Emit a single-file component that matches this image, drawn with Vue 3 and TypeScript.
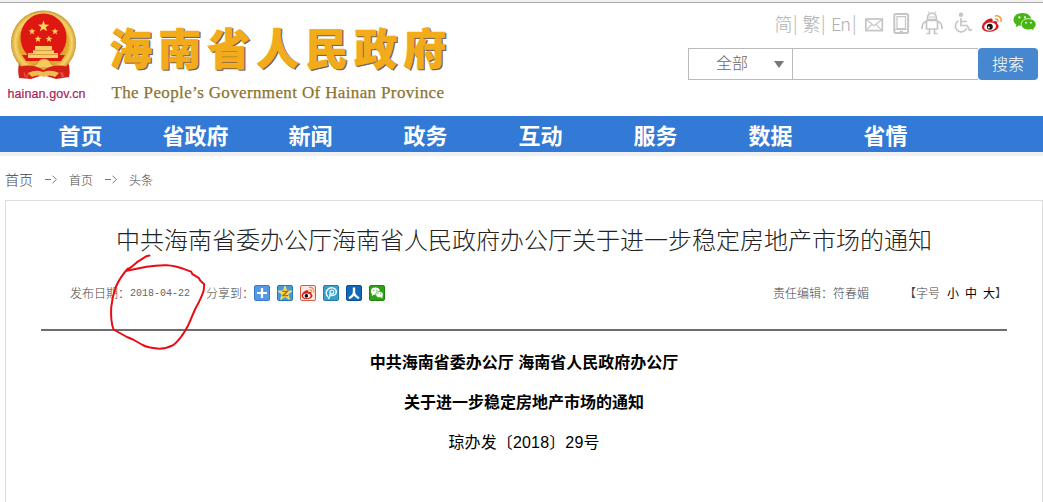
<script setup lang="ts">
const navItems: string[] = ['首页', '省政府', '新闻', '政务', '互动', '服务', '数据', '省情']
const crumbs: string[] = ['首页', '头条']
const star = 'M0-1 .24-.32 .95-.31 .38.12 .59.81 0 .4-.59.81-.38.12-.95-.31-.24-.32Z'
const smallStars: number[][] = [[32, 31.5], [55, 31.5], [38, 39], [49, 39]]
</script>

<template>
  <div class="page">
    <div class="strip"></div>
    <header class="header">
      <svg class="logo" width="460" height="113" viewBox="0 3 460 113">
        <defs>
          <radialGradient id="gold">
            <stop offset=".74" stop-color="#e3a62c" />
            <stop offset=".87" stop-color="#f3d568" />
            <stop offset="1" stop-color="#d29f34" />
          </radialGradient>
        </defs>
        <path d="M20 59Q17 69 19 78L31 79 43 75 56 79 69 77Q71 69 67 58Z" fill="#d3211a" />
        <path d="M23 66l2 11M64 66l-2 11M29 73l-3 5M60 72l4 5" stroke="#ee5540" stroke-width="1.3" />
        <ellipse cx="43.5" cy="43" rx="32.5" ry="32.5" fill="url(#gold)" />
        <ellipse cx="43.5" cy="43" rx="32" ry="32" fill="none" stroke="#c1944a" stroke-width=".6" stroke-dasharray="2 1.5" />
        <ellipse cx="43.5" cy="37.5" rx="23" ry="24" fill="#df1712" />
        <path d="M22 55h43l-4 6H26Z" fill="#df1712" />
        <path d="M33 53v-3h2v-4h17v4h2v3h4v5H28v-5Z" fill="#f4cf68" />
        <path d="M33 50.5h21M28 54.5h30" stroke="#c77a28" stroke-width=".6" />
        <g :transform="'translate(43.5 26.5) scale(6)'"><path :d="star" fill="#ffd65b" /></g>
        <g v-for="s in smallStars" :key="s.join()" :transform="`translate(${s[0]} ${s[1]}) scale(3.6)`">
          <path :d="star" fill="#ffd35c" />
        </g>
        <path d="M37 64q2-5 7-5t7 5l3 1-3 3H37l-4-3Z" fill="#f3ca60" stroke="#c58a22" stroke-width=".8" />
        <path d="M20 67q11-4 23.500 3 12-7 24-3l-2 6q-11-3-22 3-10-6-22-3Z" fill="#d3211a" />
        <path d="M28 73q8-4 15-1 8-3 16 1l-4 4q-6-3-11 0-7-3-12 0Z" fill="#efbd4d" />
        <text class="domain" x="7.5" y="98" textLength="78">hainan.gov.cn</text>
        <text class="brand shadow" x="110.5" y="66.4" textLength="337">海南省人民政府</text>
        <text class="brand" x="109.200" y="65" textLength="337">海南省人民政府</text>
        <text class="english" x="111.5" y="97.7" textLength="332.5">The People’s Government Of Hainan Province</text>
      </svg>
      <div class="tools">
        <svg class="toolbar" width="270" height="28" viewBox="770 10 270 28">
          <g class="lang">
            <text x="774.5" y="31">简</text><text x="793" y="30">|</text>
            <text x="802.5" y="31">繁</text><text x="821" y="30">|</text>
            <text x="831" y="31" textLength="20">En</text><text x="852" y="30">|</text>
          </g>
          <g fill="none" stroke="#c6c6c6" stroke-width="1.7">
            <rect x="865.8" y="19" width="16.5" height="11.6" />
            <path d="M866 19.5l8 6.3 8-6.3M866 30.3l6-6M882 30.3l-6-6" stroke-width="1.2" />
            <rect x="894.3" y="14" width="13.8" height="19" rx="1.5" stroke-width="2" />
            <path d="M897 16.7h8.5v11.8H897ZM894 29.5h14M899.8 31.4h3" stroke-width="1.2" />
            <path d="M927.5 19.500v-2a4.400 4.400 0 0 1 8.800 0v2ZM926.500 20.500h11v8.500h-11ZM926 21.500q-3.500 1-4 6M938 21.500q3.500 1 4 6M929.500 29.500v4h-3M934.500 29.500v4h3M922 29v-3M942 29v-3" />
            <path d="M929 13l-1-1.500M935 13l1-1.500M929 17h6" stroke-width="1.2" />
            <path d="M961 18v7.500h6.300l2.400 5 2.500-1M961 21.500h6M958.500 20.800a5.900 5.900 0 1 0 8.200 7.500" />
            <circle cx="961" cy="14.8" r="1.4" fill="#c6c6c6" />
          </g>
          <g>
            <path d="M982 27c0-5 7.5-9.8 10-8.2 1.2.8.8 2.2.4 3 3-1.3 5.5-.9 4.5 2 3.6 1.4 1.9 7.2-6.5 7.9-5 .3-8.4-1.6-8.4-4.7Z" fill="#d91822" />
            <ellipse cx="990.2" cy="26.6" rx="6" ry="4" fill="#fff" transform="rotate(-8 990 27)" />
            <circle cx="989.8" cy="26.8" r="3" fill="#161616" />
            <circle cx="988.8" cy="27.4" r="1" fill="#fff" />
            <path d="M995 16c4.5-.8 7.2 2.1 6 6M995.2 19c2-.3 3.2 1 2.7 2.8" fill="none" stroke="#ee9a35" stroke-width="1.5" />
          </g>
          <g fill="#48b514">
            <path d="M1022.5 13c-5.4 0-9 2.9-9 6.7 0 2.1 1.1 3.8 2.9 5l-.8 2.5 3.2-1.6 3.7.5c5 0 8.8-2.8 8.8-6.5s-3.6-6.6-8.8-6.6Z" />
            <path d="M1028.6 18.7c-4.3 0-7.4 2.4-7.4 5.6s3.1 5.7 7.4 5.7l2.8-.4 2.9 1.4-.7-2.2c1.5-1.1 2.5-2.6 2.5-4.5 0-3.2-3.3-5.6-7.5-5.6Z" stroke="#fff" stroke-width=".8" />
            <g fill="#fff"><circle cx="1019.4" cy="17.4" r="1.1" /><circle cx="1025" cy="17.4" r="1.1" /><circle cx="1026" cy="22.7" r=".9" /><circle cx="1031" cy="22.7" r=".9" /></g>
          </g>
        </svg>
        <div class="search">
          <div class="scope"><span>全部</span><i class="caret"></i></div>
          <div class="field"></div>
          <button class="go">搜索</button>
        </div>
      </div>
    </header>

    <nav class="nav">
      <a v-for="item in navItems" :key="item">{{ item }}</a>
    </nav>

    <div class="crumbs">
      <span class="root">首页</span>
      <template v-for="c in crumbs" :key="c">
        <svg width="12" height="9" viewBox="0 0 12 9"><path d="M0 4.5h6M7.5.7l3.800 3.800-3.800 3.800" fill="none" stroke="#777" /></svg>
        <span>{{ c }}</span>
      </template>
    </div>

    <main class="card">
      <h1>中共海南省委办公厅海南省人民政府办公厅关于进一步稳定房地产市场的通知</h1>
      <div class="meta">
        <span>发布日期：</span><span class="date">2018-04-22</span>
        <span class="share-label">分享到：</span>
        <div class="share">
          <svg viewBox="0 0 16 16"><rect x=".5" y=".5" width="15" height="15" rx="1.5" fill="#5598e8" stroke="#3c78c8" /><path d="M8 3v10M3 8h10" stroke="#fff" stroke-width="2.2" /></svg>
          <svg viewBox="0 0 16 16"><rect x=".5" y=".5" width="15" height="15" rx="1.5" fill="#469bd5" stroke="#2877b6" /><path transform="translate(8 8.4) scale(7.4)" :d="star" fill="#ffd431" stroke="#ffe77b" stroke-width=".12" stroke-linejoin="round" /><path d="M5.3 6.4h5L6 10.6h5" fill="none" stroke="#a86e00" stroke-width="1.4" /></svg>
          <svg viewBox="0 0 16 16"><rect x=".5" y=".5" width="15" height="15" rx="1.5" fill="#fce8dc" stroke="#d75c43" /><path d="M1.7 11c0-3.5 4.8-6.7 6.3-5.5.8.6.5 1.4.3 2 2-.8 3.7-.5 3 1.4 2.5 1.2 1.1 5-4.5 5.2-3 .1-5.1-1-5.1-3.1Z" fill="#d91d1b" /><ellipse cx="6.8" cy="10.8" rx="3.7" ry="2.4" fill="#fff" /><circle cx="6.4" cy="10.9" r="1.8" fill="#111" /><path d="M9 2.5c3.5-.7 5.8 2 4.8 5M9.3 4.8c1.8-.2 2.8.8 2.3 2.2" fill="none" stroke="#f08d3a" stroke-width="1.2" /></svg>
          <svg viewBox="0 0 16 16"><rect x=".5" y=".5" width="15" height="15" rx="1.5" fill="#3aa0c8" stroke="#227da8" /><path d="M5 11.800C2.500 9.800 2.600 5.800 5.400 3.800 8.500 1.700 13.400 3 13.300 7c-.1 3.300-3.500 4.300-5.500 2.600M5.400 14c1.500-1.600 1.800-4 2.200-6.600" fill="none" stroke="#e8f8ff" stroke-width="1.5" /><circle cx="8.8" cy="7" r="1.9" fill="none" stroke="#e8f8ff" stroke-width="1.2" /></svg>
          <svg viewBox="0 0 16 16"><rect x=".5" y=".5" width="15" height="15" rx="1.5" fill="#1168bb" stroke="#094f98" /><path d="M8 2.5v4c0 3-1.700 5.300-5 6.700M8 6.500c0 3 1.700 5.300 5 6.700" fill="none" stroke="#fff" stroke-width="2.3" /></svg>
          <svg viewBox="0 0 16 16"><rect x=".5" y=".5" width="15" height="15" rx="1.5" fill="#2da313" stroke="#1e850d" /><ellipse cx="6.3" cy="6.2" rx="4.4" ry="3.6" fill="#fff" /><path d="M3 8.5L2.8 11 6 9Z" fill="#fff" /><ellipse cx="10.4" cy="9.5" rx="3.8" ry="3.1" fill="#fff" stroke="#2da313" stroke-width=".7" /><path d="M11.5 12l2 1.4-.2-2.7Z" fill="#fff" /><g fill="#2da313"><circle cx="4.8" cy="5.3" r=".6" /><circle cx="7.8" cy="5.3" r=".6" /><circle cx="9.1" cy="8.8" r=".5" /><circle cx="11.7" cy="8.8" r=".5" /></g></svg>
        </div>
        <span class="editor">责任编辑：符春媚</span>
        <span class="sizes">【字号<b>小</b><b>中</b><b>大</b>】</span>
      </div>
      <div class="body">
        <p><strong>中共海南省委办公厅 海南省人民政府办公厅</strong></p>
        <p><strong>关于进一步稳定房地产市场的通知</strong></p>
        <p class="number">琼办发〔2018〕29号</p>
      </div>
    </main>

    <svg class="mark" width="110" height="105" viewBox="103 250 110 105">
      <path d="M149.5 255.5l-3 .7-9.8 6.2-6 5-5.2 3.6 21-4.3q10-1.7 20-1.5 9 .3 18.5 4.2l6 2.2 1.5 2.6 6.5 4 1.2 2.4 4 3.6-.5 6.3q-2.5 8-8.5 18.5l-7.5 17.3q-7 13-14 18.500-8 4.200-16 3.800-10-1-15-3.600l-9.700-5.500-6-2.500-13.500-7.500q-3-8-2.300-22 .8-10 4.800-21 4.500-10 12-18" />
    </svg>
  </div>
</template>

<style>
body { margin: 0; background: #fff; overflow: hidden; }
</style>

<style scoped>
.page { position: relative; width: 1043px; height: 502px; overflow: hidden; font-family: "Liberation Sans", "Noto Sans CJK SC", sans-serif; color: #777; text-spacing-trim: space-all; }
.strip { height: 2px; background: #f0f0f0; border-bottom: 1px solid #aaa; }
.header { display: flex; justify-content: space-between; height: 113px; }
.logo { display: block; }
.domain { font-size: 12.5px; fill: #a8235a; stroke: #a8235a; stroke-width: .2px; }
.brand { font: 900 43px "Noto Sans CJK SC", sans-serif; fill: #f2ab1b; stroke: #f2ab1b; stroke-width: .6px; }
.brand.shadow { fill: #6e5a45; stroke: #6e5a45; }
.english { font: 17px "Liberation Serif", serif; fill: #8c742e; stroke: #8c742e; stroke-width: .25px; }
.tools { display: flex; flex-direction: column; align-items: flex-end; width: 355px; padding: 7px 5px 0 0; box-sizing: border-box; }
.toolbar { display: block; margin-right: -2px; }
.lang { font: 300 18px "Noto Sans CJK SC", sans-serif; fill: #b0b0b0; }
.search { display: flex; width: 350px; height: 32px; margin-top: 10px; }
.scope { display: flex; align-items: center; width: 105px; box-sizing: border-box; border: 1px solid #bbb; padding: 0 8px 4px 27px; justify-content: space-between; font: 300 16px "Noto Sans CJK SC", sans-serif; color: #666; }
.caret { border: 5px solid transparent; border-top: 7px solid #777; border-bottom: 0; margin-top: 5px; }
.field { flex: 1; border: solid #bbb; border-width: 1px 0; }
.go { width: 60px; padding: 0 0 2px; border: 0; border-radius: 4px; background: #4687cf; color: #fff; font: 300 16px "Noto Sans CJK SC", sans-serif; }
.nav { display: flex; height: 36px; padding-left: 23px; background: #337ad7; border-bottom: 4px solid #f0f0f3; }
.nav a { width: 115px; text-align: center; font: bold 22px/36px "Noto Sans CJK SC", sans-serif; color: #fff; }
.crumbs { display: flex; align-items: center; height: 44px; padding: 3px 0 0 5px; box-sizing: border-box; font-size: 12px; }
.crumbs .root { font-size: 14px; }
.crumbs span { font-weight: 300; font-family: "Noto Sans CJK SC", sans-serif; color: #444; margin-top: -1px; }
.crumbs svg { margin: 0 12px; }
.card { width: 1038px; height: 320px; margin-left: 5px; box-sizing: border-box; border: 1px solid #ddd; padding: 0 35px; }
h1 { margin: 0; padding-top: 18px; text-align: center; white-space: nowrap; font: 300 24px/40px "Noto Sans CJK SC", sans-serif; color: #222; }
.meta { display: flex; align-items: center; height: 70px; padding-left: 29px; border-bottom: 2px solid #6d6d6f; font: 300 12px "Noto Sans CJK SC", sans-serif; color: #444; white-space: nowrap; }
.meta > span { margin-top: -3px; }
.meta .date { width: 60px; margin-top: -1px; font: 10px "Liberation Mono", monospace; color: #666; }
.share-label { margin-left: 16px; }
.share { display: flex; gap: 7px; }
.share svg { width: 16px; height: 16px; margin-top: -2px; }
.editor { margin-left: auto; }
.sizes { margin-left: 35px; }
.sizes b { font-weight: 400; color: #000; margin-left: 6px; }
.sizes b:first-child { margin-left: 7px; }
.body { padding-top: 12px; text-align: center; font-size: 16px; line-height: 40px; color: #000; }
.body p { margin: 0; }
.body .number { letter-spacing: .15px; }
.mark { position: absolute; left: 103px; top: 250px; fill: none; stroke: #e80c14; stroke-width: 2px; stroke-linecap: round; stroke-linejoin: round; }
</style>
